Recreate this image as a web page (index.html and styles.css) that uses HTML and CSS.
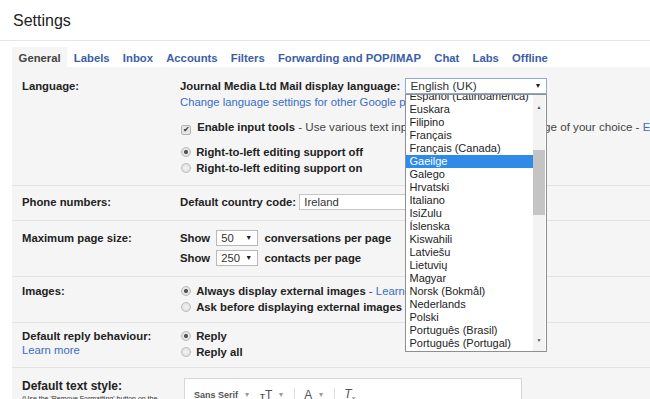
FILE: index.html
```html
<html>
   <head>
      <link rel="stylesheet" href="styles.css">
   </head>
   <body>
      <div class="header"><h1 class="title">Settings</h1></div>
      <div class="tabs">
         <span class="tab active">General</span>
         <span class="tab">Labels</span>
         <span class="tab">Inbox</span>
         <span class="tab">Accounts</span>
         <span class="tab">Filters</span>
         <span class="tab">Forwarding and POP/IMAP</span>
         <span class="tab">Chat</span>
         <span class="tab">Labs</span>
         <span class="tab">Offline</span>
      </div>
      <div class="panel">
         <div class="row lang">
            <div class="label">Language:</div>
            <div class="value">
               <div class="line"><b>Journal Media Ltd Mail display language:</b> <span class="select langSelect">English (UK)<span class="arrow">&#9660;</span>
                  <div class="dropdown">
                     <div class="options">
                        <div class="opt first">Español (Latinoamérica)</div>
                        <div class="opt">Euskara</div>
                        <div class="opt">Filipino</div>
                        <div class="opt">Français</div>
                        <div class="opt">Français (Canada)</div>
                        <div class="opt picked">Gaeilge</div>
                        <div class="opt">Galego</div>
                        <div class="opt">Hrvatski</div>
                        <div class="opt">Italiano</div>
                        <div class="opt">IsiZulu</div>
                        <div class="opt">Íslenska</div>
                        <div class="opt">Kiswahili</div>
                        <div class="opt">Latviešu</div>
                        <div class="opt">Lietuvių</div>
                        <div class="opt">Magyar</div>
                        <div class="opt">Norsk (Bokmål)</div>
                        <div class="opt">Nederlands</div>
                        <div class="opt">Polski</div>
                        <div class="opt">Português (Brasil)</div>
                        <div class="opt">Português (Portugal)</div>
                        <div class="opt">Română</div>
                     </div>
                     <div class="scrollbar">
                        <span class="up">&#9650;</span>
                        <span class="thumb"></span>
                        <span class="down">&#9660;</span>
                     </div>
                  </div>
               </span></div>
               <div class="line"><span class="link">Change language settings for other Google products</span></div>
               <div class="line spaced"><span class="check">&#10004;</span> <b>Enable input tools</b> <span class="note">- Use various text input<span class="under"> methods to type in the</span> language of your choice -</span> <span class="link">Edit tools</span></div>
               <div class="line spaced"><span class="radio on"></span> <b>Right-to-left editing support off</b></div>
               <div class="line"><span class="radio"></span> <b>Right-to-left editing support on</b></div>
            </div>
         </div>
         <div class="row phone">
            <div class="label">Phone numbers:</div>
            <div class="value">
               <div class="line"><b>Default country code:</b> <span class="field">Ireland</span></div>
            </div>
         </div>
         <div class="row pagesize">
            <div class="label">Maximum page size:</div>
            <div class="value">
               <div class="line"><b>Show</b> <span class="select small">50<span class="arrow">&#9660;</span></span> <b>conversations per page</b></div>
               <div class="line spacedSmall"><b>Show</b> <span class="select small">250<span class="arrow">&#9660;</span></span> <b>contacts per page</b></div>
            </div>
         </div>
         <div class="row images">
            <div class="label">Images:</div>
            <div class="value">
               <div class="line"><span class="radio on"></span> <b>Always display external images</b> <span class="note">-</span> <span class="link">Learn more</span></div>
               <div class="line"><span class="radio"></span> <b>Ask before displaying external images</b></div>
            </div>
         </div>
         <div class="row reply">
            <div class="label">Default reply behaviour:<br><span class="link plain">Learn more</span></div>
            <div class="value">
               <div class="line"><span class="radio on"></span> <b>Reply</b></div>
               <div class="line"><span class="radio"></span> <b>Reply all</b></div>
            </div>
         </div>
         <div class="row textstyle">
            <div class="label"><span class="big">Default text style:</span><br><span class="tiny">(Use the 'Remove Formatting' button on the toolbar to reset the default text style)</span></div>
            <div class="value">
               <div class="editor">
                  <div class="toolbar">
                     <span class="tool">Sans Serif</span><span class="caret">&#9662;</span>
                     <span class="tool sizeIcon"><span class="t1">T</span><span class="t2">T</span></span><span class="caret">&#9662;</span>
                     <span class="sep"></span>
                     <span class="tool colorA">A</span><span class="caret">&#9662;</span>
                     <span class="sep"></span>
                     <span class="tool clearT">T<sub>x</sub></span>
                  </div>
               </div>
            </div>
         </div>
      </div>
   </body>
</html>
```

FILE: styles.css
```css
body {
margin: 0;
font-family: "Liberation Sans", Arial, sans-serif;
font-size: 11.3px;
color: #222;
background-color: #fff;
overflow: hidden;
}
.header {
height: 41px;
box-sizing: border-box;
border-bottom: 1px solid #e6e6e6;
padding-left: 13px;
}
.title {
margin: 0;
padding-top: 10px;
font-size: 16px;
font-weight: normal;
line-height: 22px;
color: #222;
}
.tabs {
display: flex;
margin: 6px 0 0 12px;
height: 20px;
}
.tab {
padding: 0 6.6px;
line-height: 22px;
font-weight: bold;
color: #3c5ea8;
}
.tab.active {
background-color: #f5f5f5;
color: #444;
}
.panel {
margin-left: 12px;
background-color: #f5f5f5;
}
.row {
display: grid;
grid-template-columns: 158px 1fr;
padding-left: 10px;
border-bottom: 1px solid #e3e3e3;
}
.label {
font-weight: bold;
line-height: 16px;
}
.lang { padding: 11px 0 9px 10px; }
.phone { padding: 8px 0 10px 10px; }
.pagesize { padding: 9px 0 10px 10px; }
.images { padding: 6px 0 7px 10px; }
.reply { padding: 5px 0 7px 10px; }
.textstyle { padding: 10px 0 0 10px; height: 40px; }
.line {
height: 16px;
line-height: 16px;
white-space: nowrap;
}
.spaced { margin-top: 9px; }
.spacedSmall { margin-top: 4px; }
.link {
color: #3b6cc4;
font-weight: normal;
}
.plain {
line-height: 12px;
}
.note {
color: #444;
font-size: 11.6px;
}
/* part of the sentence that sits behind the open dropdown */
.under {
letter-spacing: -0.5px;
word-spacing: -3.3px;
}
.select {
display: inline-block;
position: relative;
box-sizing: border-box;
height: 16px;
line-height: 14px;
vertical-align: top;
background-color: #fff;
border: 1px solid #b9b9b9;
padding-left: 4px;
color: #333;
}
.langSelect {
width: 142px;
margin-left: 2px;
border-color: #8fa9d6;
font-size: 11.8px;
}
.small {
width: 42px;
margin: 0 3px;
}
.arrow {
position: absolute;
right: 5px;
top: 0;
font-size: 7px;
color: #222;
}
.dropdown {
position: absolute;
left: -1px;
top: 15px;
width: 142px;
height: 258px;
box-sizing: border-box;
background-color: #fff;
border: 1px solid #8f8f8f;
display: flex;
z-index: 2;
}
.options {
flex: 1;
overflow: hidden;
}
.opt {
height: 13px;
line-height: 13px;
font-size: 11px;
padding-left: 3px;
color: #222;
}
.first {
margin-top: -5px;
}
.picked {
background-color: #2f8ae8;
color: #fff;
}
.scrollbar {
width: 12px;
margin-right: 1px;
position: relative;
background-color: #f3f3f3;
}
.up, .down {
position: absolute;
left: 3px;
font-size: 5px;
color: #555;
}
.up { top: 5px; }
.down { bottom: 4px; }
.thumb {
position: absolute;
left: 0;
right: 0;
top: 55px;
height: 65px;
background-color: #c4c4c4;
}
.check {
display: inline-block;
box-sizing: border-box;
width: 10px;
height: 10px;
vertical-align: -1px;
background-color: #e4e4e4;
border: 1px solid #b5b5b5;
border-radius: 2px;
font-size: 8px;
line-height: 8px;
text-align: center;
color: #333;
margin: 0 3px 0 1px;
}
.radio {
display: inline-block;
box-sizing: border-box;
width: 10px;
height: 10px;
vertical-align: -1px;
border-radius: 50%;
border: 1px solid #bcbcbc;
background: radial-gradient(circle, #f4f4f4, #d9d9d9);
margin: 0 2px 0 1px;
}
.radio.on {
background: radial-gradient(circle, #555 0, #555 1.8px, #e8e8e8 2.3px, #d6d6d6 100%);
}
.field {
display: inline-block;
box-sizing: border-box;
width: 160px;
height: 16px;
line-height: 14px;
vertical-align: top;
background-color: #fff;
border: 1px solid #c6c6c6;
padding-left: 4px;
color: #333;
}
.big {
font-size: 12px;
}
.tiny {
font-size: 7px;
font-weight: normal;
line-height: 10px;
color: #333;
}
.editor {
margin: 0 0 0 4px;
width: 338px;
height: 40px;
box-sizing: border-box;
border: 1px solid #d6d6d6;
border-bottom: none;
background-color: #fff;
}
.toolbar {
display: flex;
align-items: center;
padding: 8px 0 0 9px;
color: #555;
}
.tool {
font-size: 9px;
font-weight: bold;
}
.caret {
font-size: 8px;
color: #999;
margin: 0 11px 0 7px;
}
.sizeIcon .t1 {
font-size: 8px;
}
.sizeIcon .t2 {
font-size: 12px;
font-weight: normal;
}
.sep {
width: 1px;
height: 14px;
background-color: #ddd;
margin-right: 9px;
}
.colorA {
font-size: 12px;
font-weight: normal;
text-decoration: underline;
}
.clearT {
font-size: 12px;
font-weight: normal;
font-style: italic;
text-decoration: underline;
}
.clearT sub {
font-size: 7px;
}
```
